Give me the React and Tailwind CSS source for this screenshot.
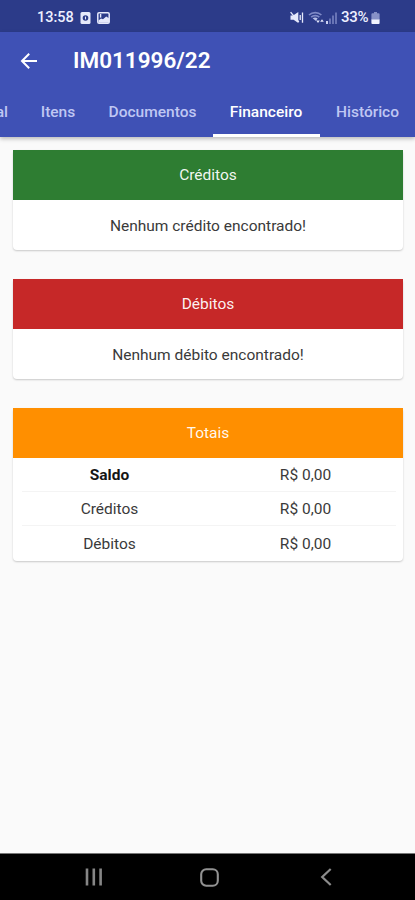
const tabs = [
  { label: 'al', width: 'w-6 justify-end pr-4' },
  { label: 'Itens', width: 'w-[68px] justify-center' },
  { label: 'Documentos', width: 'w-[121px] justify-center' },
  { label: 'Financeiro', width: 'w-[107px] justify-center pr-px', active: true },
  { label: 'Histórico', width: 'w-[95px] justify-center' },
];

function StatusBar() {
  return (
    <div className="flex h-8 shrink-0 items-center bg-[#2c3b89] pl-[37px] pr-[35px] pt-[3px] text-[#eef0ff]">
      <span className="w-[43px] whitespace-nowrap text-[14.5px] font-medium">13:58</span>
      <svg className="block" width="11" height="12" viewBox="0 0 11 12">
        <rect x="0.5" y="0" width="10" height="12" rx="1.5" fill="#e6e9fb" />
        <circle cx="5.5" cy="6" r="2.8" fill="#2c3b89" />
        <path d="M5.5 4.6v2.8" stroke="#e6e9fb" strokeWidth="1.1" fill="none" />
      </svg>
      <svg className="ml-[6px] block" width="13" height="12" viewBox="0 0 13 12">
        <rect x="0.8" y="0.8" width="11.4" height="10.4" rx="1.3" fill="#2c3b89" stroke="#e6e9fb" strokeWidth="1.5" />
        <path d="M1.5 10.7V8.6L4 6.6l2 .6 3.2-2.6 2.8 1.6v4.5z" fill="#e6e9fb" />
        <path d="M3.6 2v3.6" stroke="#e6e9fb" strokeWidth="1.4" />
      </svg>
      <div className="ml-auto flex items-center">
        <svg className="block" width="15" height="13" viewBox="0 0 15 13">
          <path d="M.5 4.4h2.6L8.3 1v11L3.6 8.8H.5z" fill="#e6e9fb" />
          <path d="M.6 1.2l8.2 9.8" stroke="#e6e9fb" strokeWidth="1.3" />
          <path d="M10.2 4v5M12.5 1.4v10.4" stroke="#e6e9fb" strokeWidth="1.3" />
        </svg>
        <svg className="ml-[3px] block" width="17" height="13" viewBox="0 0 17 13">
          <path d="M1 4C4.5.7 10 .7 13.4 4M3.2 6.2c2.2-2 5.9-2 8.1 0" fill="none" stroke="#7f8ac6" strokeWidth="1.7" />
          <path d="M4.6 7.2c1.4-1 3.5-1 5 0L8 10z" fill="#b9c1e8" />
          <path d="M8.2 9.4h3.6L10 12zM12.2 10.8L14 8.2l1.8 2.6z" fill="#e6e9fb" />
        </svg>
        <svg className="ml-[1px] block" width="11" height="12" viewBox="0 0 11 12">
          <rect x="0" y="9" width="2" height="3" fill="#cbd1f1" />
          <rect x="3" y="6.5" width="2" height="5.5" fill="#6874b5" />
          <rect x="6" y="3.5" width="2" height="8.5" fill="#6874b5" />
          <rect x="9" y="0.5" width="2" height="11.5" fill="#6874b5" />
        </svg>
        <span className="ml-[4px] w-[30px] whitespace-nowrap text-[15px] font-medium tracking-[-0.3px]">33%</span>
        <svg className="block" width="9" height="12" viewBox="0 0 9 12">
          <path d="M3 0h3v1.2h1.6q1 0 1 1V8H.4V2.2q0-1 1-1H3z" fill="#8791c8" />
          <path d="M.4 7.6h8.2V11q0 1-1 1H1.4q-1 0-1-1z" fill="#f2f4ff" />
        </svg>
      </div>
    </div>
  );
}

function AppBar() {
  return (
    <header className="z-10 h-[105px] shrink-0 bg-[#3f51b5] shadow-[0_2px_4px_rgba(0,0,0,0.25)]">
      <div className="flex h-14 items-center pl-[20px] pt-[2px] text-white">
        <svg className="block" width="18" height="18" viewBox="0 0 18 18" fill="none" stroke="#fff" strokeWidth="2">
          <path d="M17 9H2.5M9.2 1.8L2 9l7.2 7.2" />
        </svg>
        <h1 className="ml-[35px] pb-[2px] text-[22.5px] font-semibold leading-none">IM011996/22</h1>
      </div>
      <nav className="flex h-[49px] w-full">
        {tabs.map(({ label, width, active }) => (
          <div
            key={label}
            className={`flex shrink-0 items-center border-b-[3px] pt-[4px] whitespace-nowrap text-[15.5px] font-medium ${width} ${active ? 'border-white text-white' : 'border-transparent text-[#bfc7f3]'}`}
          >
            {label}
          </div>
        ))}
      </nav>
    </header>
  );
}

function Card({ title, color, children }) {
  return (
    <section className="rounded bg-white shadow-[0_1px_2px_rgba(0,0,0,0.2)]">
      <h2 className={`flex h-[50px] items-center justify-center pt-px text-[15.5px] text-white/95 ${color}`}>{title}</h2>
      {children}
    </section>
  );
}

const totals = [
  { name: 'Saldo', value: 'R$ 0,00', strong: true },
  { name: 'Créditos', value: 'R$ 0,00' },
  { name: 'Débitos', value: 'R$ 0,00' },
];

export default function App() {
  return (
    <div className="flex h-[900px] w-full flex-col overflow-hidden bg-[#fafafa] font-[Roboto,sans-serif] text-[15.5px] text-[#3a3a3a]">
      <StatusBar />
      <AppBar />
      <main className="flex flex-1 flex-col gap-[29px] pl-[13px] pr-3 pt-[13px]">
        <Card title="Créditos" color="bg-[#2e7d32]">
          <p className="flex h-[50px] items-center justify-center pt-[3px]">Nenhum crédito encontrado!</p>
        </Card>
        <Card title="Débitos" color="bg-[#c62828]">
          <p className="flex h-[50px] items-center justify-center pt-[3px]">Nenhum débito encontrado!</p>
        </Card>
        <Card title="Totais" color="bg-[#ff8f00]">
          <div className="pb-px pl-[9px] pr-[7px]">
            {totals.map(({ name, value, strong }, i) => (
              <div
                key={name}
                className={`grid h-[34px] grid-cols-[175px_1fr] items-center pt-[3px] text-center ${i < 2 ? 'border-b border-[#f4f4f4]' : ''}`}
              >
                <span className={strong ? 'font-bold text-[#151515]' : ''}>{name}</span>
                <span className="pl-[18px]">{value}</span>
              </div>
            ))}
          </div>
        </Card>
      </main>
      <footer className="flex h-[47px] shrink-0 items-center border-t border-[#777] bg-black">
        <svg className="ml-[85px] block" width="18" height="18" viewBox="0 0 18 18" stroke="#868686" strokeWidth="2.6">
          <path d="M2 0.5v17M8.8 0.5v17M15.6 0.5v17" />
        </svg>
        <svg className="ml-[97px] block" width="19" height="19" viewBox="0 0 19 19" fill="none" stroke="#929292" strokeWidth="2.1">
          <rect x="1.2" y="1.2" width="16.6" height="16.6" rx="5" />
        </svg>
        <svg className="ml-[101px] block" width="12" height="18" viewBox="0 0 12 18" fill="none" stroke="#8c8c8c" strokeWidth="2.2">
          <path d="M10.7 1L2.2 9l8.5 8" />
        </svg>
      </footer>
    </div>
  );
}
